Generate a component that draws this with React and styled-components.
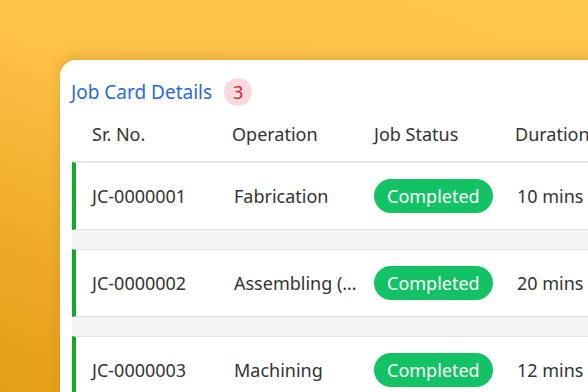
import React from "react";
import styled, { createGlobalStyle } from "styled-components";

const GlobalStyle = createGlobalStyle`
  html, body {
    margin: 0;
    padding: 0;
    width: 588px;
    height: 392px;
    overflow: hidden;
  }
  body {
    font-family: "Noto Sans", "Open Sans", sans-serif;
  }
`;

const Backdrop = styled.div`
  width: 588px;
  height: 392px;
  overflow: hidden;
  background: linear-gradient(200deg, #ffc74c 0%, #fdc248 40%, #eeaa26 75%, #e39f16 100%);
  padding: 60px 0 0 60px;
  box-sizing: border-box;
`;

const Card = styled.section`
  width: 620px;
  height: 400px;
  background: #fff;
  border-radius: 16px 0 0 0;
  box-shadow: 0 -4px 12px rgba(160, 110, 20, 0.25);
  padding: 18px 0 0 11px;
  box-sizing: border-box;
`;

const TitleRow = styled.div`
  display: flex;
  align-items: center;
  gap: 12px;
  height: 28px;
`;

const Title = styled.h2`
  margin: 0;
  font-size: 19px;
  font-weight: 400;
  color: #2a6ad8;
`;

const CountBadge = styled.span`
  width: 28px;
  height: 28px;
  border-radius: 50%;
  background: #fcd9dc;
  color: #d8202e;
  font-size: 18px;
  display: flex;
  align-items: center;
  justify-content: center;
`;

const HeaderRow = styled.div`
  display: grid;
  grid-template-columns: 140px 142px 141px auto;
  align-items: center;
  height: 55px;
  border-bottom: 1px solid #e2e2e2;
  margin-left: 1px;
`;

const HeadCell = styled.div`
  padding-left: 20px;
  font-size: 18px;
  color: #333;
  white-space: nowrap;
`;

const List = styled.div`
  background: #f5f5f5;
  display: flex;
  flex-direction: column;
  gap: 19px;
  margin-left: 1px;
`;

const Row = styled.div`
  display: grid;
  grid-template-columns: 140px 146px 141px auto;
  align-items: center;
  height: 68px;
  background: #fff;
  border-left: 4px solid #15a829;
  border-bottom: 1px solid #dedede;
  border-top: 1px solid #e6e6e6;
  box-sizing: border-box;
`;

const Cell = styled.div`
  min-width: 0;
  padding-left: ${(p) => p.$indent}px;
  font-size: 18px;
  color: #333;
  white-space: nowrap;
  overflow: ${(p) => (p.$clip ? "hidden" : "visible")};
  text-overflow: ellipsis;
`;

const Status = styled.span`
  display: inline-flex;
  align-items: center;
  height: 34px;
  padding: 0 13px;
  border-radius: 17px;
  background: #12c264;
  color: #fff;
  font-size: 18px;
`;

const jobs = [
  { id: "JC-0000001", op: "Fabrication", status: "Completed", time: "10 mins" },
  { id: "JC-0000002", op: "Assembling (Final Stage)", status: "Completed", time: "20 mins" },
  { id: "JC-0000003", op: "Machining", status: "Completed", time: "12 mins" },
];

export default function App() {
  return (
    <>
      <GlobalStyle />
      <Backdrop>
        <Card>
          <TitleRow>
            <Title>Job Card Details</Title>
            <CountBadge>{jobs.length}</CountBadge>
          </TitleRow>
          <HeaderRow>
            <HeadCell>Sr. No.</HeadCell>
            <HeadCell>Operation</HeadCell>
            <HeadCell>Job Status</HeadCell>
            <HeadCell>Duration</HeadCell>
          </HeaderRow>
          <List>
            {jobs.map((j) => (
              <Row key={j.id}>
                <Cell $indent={16}>{j.id}</Cell>
                <Cell $indent={18} $clip>{j.op}</Cell>
                <Cell $indent={12}>
                  <Status>{j.status}</Status>
                </Cell>
                <Cell $indent={14}>{j.time}</Cell>
              </Row>
            ))}
          </List>
        </Card>
      </Backdrop>
    </>
  );
}
